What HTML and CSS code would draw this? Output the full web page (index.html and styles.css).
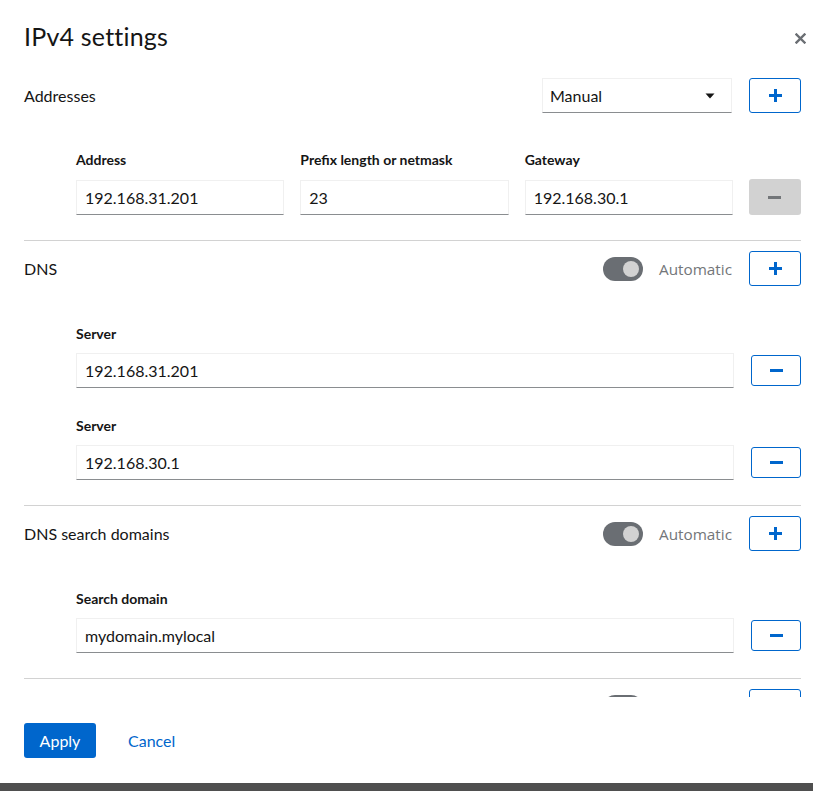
FILE: index.html
```html
<!DOCTYPE html>
<html lang="en">
<head>
<meta charset="utf-8">
<title>IPv4 settings</title>
<link rel="stylesheet" href="styles.css">
</head>
<body>
<div class="modal">
  <header class="modal-header">
    <h1 class="modal-title">IPv4 settings</h1>
    <button class="close-btn" aria-label="Close">
      <svg width="11" height="11" viewBox="0 0 11 11"><path d="M1.5 1.5 L9.5 9.5 M9.5 1.5 L1.5 9.5" stroke="#6a6e73" stroke-width="2.4" stroke-linecap="square"/></svg>
    </button>
  </header>

  <div class="modal-body">
    <section class="group">
      <div class="group-head">
        <span class="group-title">Addresses</span>
        <div class="head-controls">
          <div class="select">
            <span>Manual</span>
            <svg width="10" height="6" viewBox="0 0 10 6"><path d="M0.5 0.5 H9.5 L5 5.5 Z" fill="#151515"/></svg>
          </div>
          <button class="btn-icon"><svg width="13" height="13" viewBox="0 0 13 13"><path d="M6.5 0 V13 M0 6.5 H13" stroke="#0066cc" stroke-width="3"/></svg></button>
        </div>
      </div>
      <div class="rows first">
        <div class="addr-grid">
          <label class="field-label">Address</label>
          <label class="field-label">Prefix length or netmask</label>
          <label class="field-label">Gateway</label>
          <span></span>
          <input class="text-input" type="text" value="192.168.31.201">
          <input class="text-input" type="text" value="23">
          <input class="text-input" type="text" value="192.168.30.1">
          <button class="btn-icon disabled"><svg width="13" height="3" viewBox="0 0 13 3"><path d="M0 1.5 H13" stroke="#737679" stroke-width="3"/></svg></button>
        </div>
      </div>
    </section>

    <hr class="divider">

    <section class="group">
      <div class="group-head">
        <span class="group-title">DNS</span>
        <div class="head-controls">
          <span class="switch"><span class="knob"></span></span>
          <span class="switch-label">Automatic</span>
          <button class="btn-icon"><svg width="13" height="13" viewBox="0 0 13 13"><path d="M6.5 0 V13 M0 6.5 H13" stroke="#0066cc" stroke-width="3"/></svg></button>
        </div>
      </div>
      <div class="rows">
        <div class="single-grid">
          <label class="field-label">Server</label>
          <span></span>
          <input class="text-input" type="text" value="192.168.31.201">
          <button class="btn-icon small"><svg width="13" height="3" viewBox="0 0 13 3"><path d="M0 1.5 H13" stroke="#0066cc" stroke-width="3"/></svg></button>
        </div>
        <div class="single-grid">
          <label class="field-label">Server</label>
          <span></span>
          <input class="text-input" type="text" value="192.168.30.1">
          <button class="btn-icon small"><svg width="13" height="3" viewBox="0 0 13 3"><path d="M0 1.5 H13" stroke="#0066cc" stroke-width="3"/></svg></button>
        </div>
      </div>
    </section>

    <hr class="divider">

    <section class="group">
      <div class="group-head">
        <span class="group-title">DNS search domains</span>
        <div class="head-controls">
          <span class="switch"><span class="knob"></span></span>
          <span class="switch-label">Automatic</span>
          <button class="btn-icon"><svg width="13" height="13" viewBox="0 0 13 13"><path d="M6.5 0 V13 M0 6.5 H13" stroke="#0066cc" stroke-width="3"/></svg></button>
        </div>
      </div>
      <div class="rows">
        <div class="single-grid">
          <label class="field-label">Search domain</label>
          <span></span>
          <input class="text-input" type="text" value="mydomain.mylocal">
          <button class="btn-icon small"><svg width="13" height="3" viewBox="0 0 13 3"><path d="M0 1.5 H13" stroke="#0066cc" stroke-width="3"/></svg></button>
        </div>
      </div>
    </section>

    <hr class="divider">

    <section class="group">
      <div class="group-head">
        <span class="group-title"></span>
        <div class="head-controls">
          <span class="switch"><span class="knob"></span></span>
          <span class="switch-spacer"></span>
          <button class="btn-icon" aria-label="Add route"></button>
        </div>
      </div>
    </section>
  </div>

  <footer class="modal-footer">
    <button class="btn-primary">Apply</button>
    <button class="btn-link">Cancel</button>
  </footer>
</div>
</body>
</html>
```

FILE: styles.css
```css
html, body {
  margin: 0;
  padding: 0;
}
body {
  background: #4f4f4f;
  font-family: Lato, "Liberation Sans", sans-serif;
  color: #151515;
  height: 791px;
  overflow: hidden;
}
.modal {
  background: #ffffff;
  height: 783px;
  display: flex;
  flex-direction: column;
  box-sizing: border-box;
}
.modal-header {
  display: flex;
  align-items: center;
  justify-content: space-between;
  padding: 21px 0 0 24px;
  height: 52px;
  box-sizing: border-box;
}
.modal-title {
  margin: 0;
  font-size: 25px;
  line-height: 29px;
  font-weight: 400;
  letter-spacing: 0.2px;
}
.close-btn {
  width: 26px;
  height: 29px;
  border: 0;
  background: transparent;
  padding: 0;
  margin-top: 4px;
  display: flex;
  align-items: center;
  justify-content: center;
}
.modal-body {
  flex: 1;
  overflow: hidden;
  padding: 26px 12px 0 24px;
}
.group-head {
  display: flex;
  align-items: center;
  justify-content: space-between;
  height: 35px;
}
.group-title {
  font-size: 16px;
  line-height: 21px;
}
.head-controls {
  display: flex;
  align-items: center;
}
.select {
  width: 190px;
  height: 35px;
  box-sizing: border-box;
  border: 1px solid #f0f0f0;
  border-bottom-color: #8a8d90;
  display: flex;
  align-items: center;
  justify-content: space-between;
  padding: 0 16px 0 7px;
  font-size: 16px;
  margin-right: 17px;
}
.btn-icon {
  width: 52px;
  height: 35px;
  box-sizing: border-box;
  border: 1px solid #0066cc;
  border-radius: 3px;
  background: #ffffff;
  padding: 0;
  display: flex;
  align-items: center;
  justify-content: center;
}
.btn-icon.small {
  width: 50px;
  height: 31px;
}
.btn-icon.disabled {
  border: 0;
  background: #d2d2d2;
  height: 36px;
}
.switch {
  position: relative;
  width: 40px;
  height: 24px;
  border-radius: 12px;
  background: #6a6e73;
  margin-right: 16px;
}
.knob {
  position: absolute;
  top: 4px;
  right: 4px;
  width: 16px;
  height: 16px;
  border-radius: 50%;
  background: #d2d2d2;
}
.switch-label {
  font-family: "Open Sans", sans-serif;
  font-size: 15.3px;
  color: #737679;
  margin-right: 17px;
}
.switch-spacer {
  width: 73px;
  margin-right: 17px;
}
.rows {
  padding-left: 52px;
  margin-top: 37px;
  display: flex;
  flex-direction: column;
  gap: 27px;
}
.rows.first {
  margin-top: 36px;
}
.addr-grid {
  display: grid;
  grid-template-columns: 1fr 1fr 1fr 52px;
  column-gap: 16px;
  row-gap: 9px;
  align-items: center;
}
.single-grid {
  display: grid;
  grid-template-columns: 1fr 50px;
  column-gap: 17px;
  row-gap: 9px;
  align-items: center;
}
.field-label {
  font-size: 14px;
  line-height: 21px;
  font-weight: 700;
}
.text-input {
  display: block;
  width: 100%;
  height: 35px;
  box-sizing: border-box;
  border: 1px solid #f0f0f0;
  border-bottom-color: #8a8d90;
  padding: 6px 8px;
  font-family: Lato, "Liberation Sans", sans-serif;
  font-size: 16px;
  line-height: 21px;
  color: #151515;
  background: #ffffff;
  margin: 0;
  outline: none;
}
.divider {
  border: 0;
  border-top: 1px solid #d2d2d2;
  margin: 25px 0 10px 0;
  height: 0;
}
.modal-footer {
  display: flex;
  align-items: center;
  gap: 16px;
  padding: 26px 24px 25px 24px;
}
.btn-primary {
  width: 72px;
  height: 35px;
  border: 0;
  border-radius: 3px;
  background: #0066cc;
  color: #ffffff;
  font-family: Lato, "Liberation Sans", sans-serif;
  font-size: 16px;
  padding: 0;
}
.btn-link {
  height: 35px;
  border: 0;
  background: transparent;
  color: #0066cc;
  font-family: Lato, "Liberation Sans", sans-serif;
  font-size: 16px;
  padding: 0 16px;
}
```
